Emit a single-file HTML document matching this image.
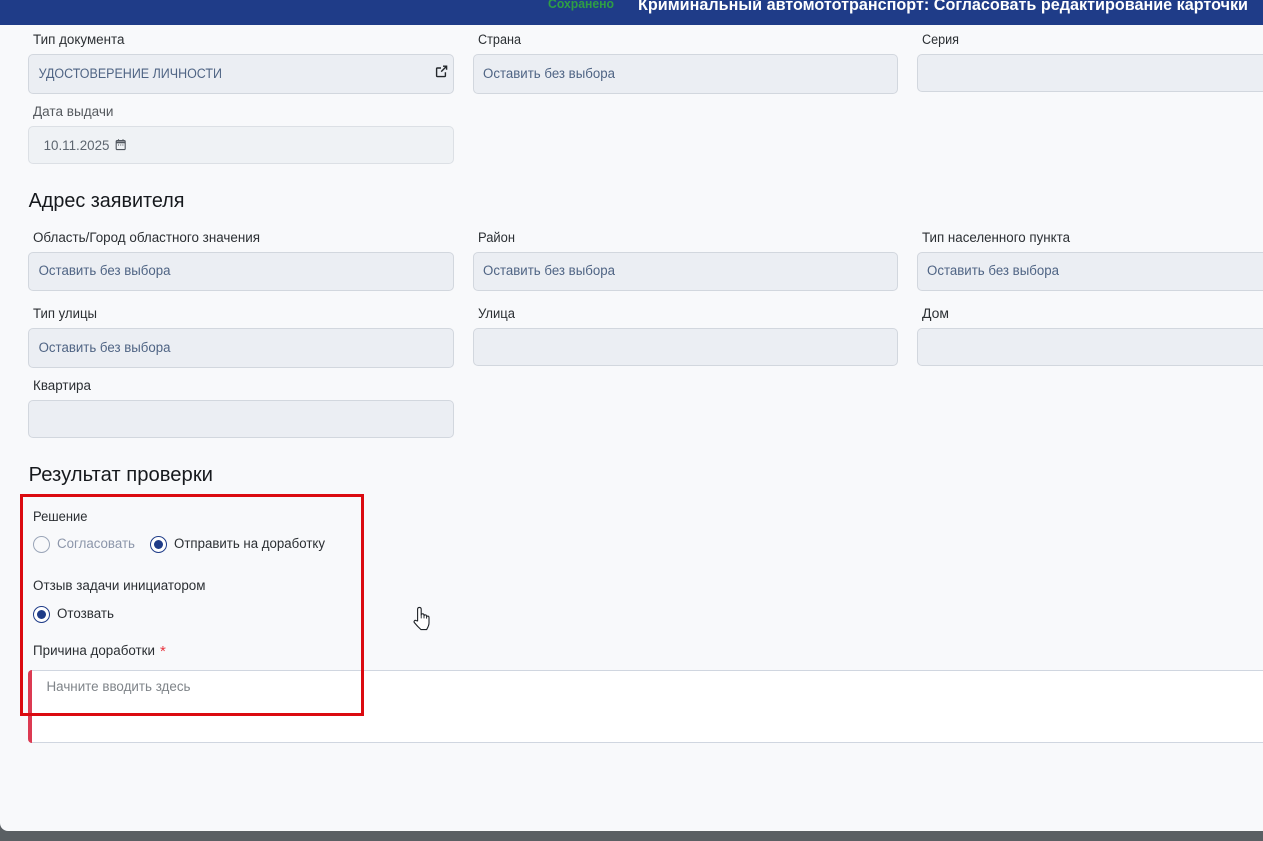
<!DOCTYPE html>
<html lang="ru"><head><meta charset="utf-8"><title>Криминальный автомототранспорт</title>
<style>
html,body{margin:0;padding:0;width:1263px;height:841px;overflow:hidden;background:#5a5f63}
body{position:relative;font-family:"Liberation Sans",sans-serif}
.page{position:absolute;left:0;top:0;width:1263px;height:831px;background:#f8f9fb;border-bottom-left-radius:8px}
.hdr{position:absolute;left:0;top:0;width:1263px;height:25px;background:#1f3c88}
.f{position:absolute;box-sizing:border-box;background:#ebeef3;border:1px solid #d2d7de;border-radius:5px;width:426px}
.f.m{width:425px}
.f.r{width:360px;border-right:0;border-radius:5px 0 0 5px}
svg.t{position:absolute;left:0;top:0}
svg.t text{font-family:"Liberation Sans",sans-serif}
.l{font-size:13.5px;fill:#2b2f33}
.v{font-size:13.5px;fill:#4f6484}
.h{font-size:20px;fill:#16191d}
.ta{position:absolute;left:28px;top:670px;width:1240px;height:73px;box-sizing:border-box;background:#fff;border:1px solid #d0d6e0;border-left:0;border-radius:4px 0 0 4px}
.bar{position:absolute;left:28px;top:670px;width:4px;height:73px;background:#dc3a52;border-radius:4px 0 0 4px}
.redbox{position:absolute;left:20px;top:494px;width:344px;height:222px;box-sizing:border-box;border:3px solid #db0a10}
.rad{position:absolute;box-sizing:border-box;width:17px;height:17px;border-radius:50%;border:1.5px solid #1f3c88;background:#fff}
.rad i{position:absolute;left:2.5px;top:2.5px;width:9px;height:9px;border-radius:50%;background:#1f3c88}
.rad.off{border-color:#9aa5b8;background:#f8f9fb}
</style></head>
<body>
<div class="page"></div>
<div class="hdr"></div>

<div class="f" style="left:28px;top:54px;height:40px"></div>
<div class="f m" style="left:473px;top:54px;height:40px"></div>
<div class="f r" style="left:917px;top:54px;height:38px"></div>
<div class="f" style="left:28px;top:126px;height:38px;background:#eff2f5;border-color:#dce0e5"></div>

<div class="f" style="left:28px;top:252px;height:39px"></div>
<div class="f m" style="left:473px;top:252px;height:39px"></div>
<div class="f r" style="left:917px;top:252px;height:39px"></div>
<div class="f" style="left:28px;top:328px;height:40px"></div>
<div class="f m" style="left:473px;top:328px;height:38px"></div>
<div class="f r" style="left:917px;top:328px;height:38px"></div>
<div class="f" style="left:28px;top:400px;height:38px"></div>

<div class="ta"></div>
<div class="bar"></div>

<div class="rad off" style="left:33px;top:536px"></div>
<div class="rad" style="left:150px;top:536px"><i></i></div>
<div class="rad" style="left:33px;top:606px"><i></i></div>

<svg class="t" width="1263" height="841" viewBox="0 0 1263 841">
<text x="548" y="8" font-size="12.5" font-weight="700" fill="#2f9e44" textLength="66" lengthAdjust="spacingAndGlyphs">Сохранено</text>
<text x="638" y="10" font-size="17" font-weight="700" fill="#ffffff" textLength="610" lengthAdjust="spacingAndGlyphs">Криминальный автомототранспорт: Согласовать редактирование карточки</text>

<text class="l" x="33" y="44" textLength="91.5" lengthAdjust="spacingAndGlyphs">Тип документа</text>
<text class="l" x="478" y="44" textLength="43" lengthAdjust="spacingAndGlyphs">Страна</text>
<text class="l" x="922" y="44" textLength="37" lengthAdjust="spacingAndGlyphs">Серия</text>
<text class="v" x="38.6" y="78" textLength="183.4" lengthAdjust="spacingAndGlyphs">УДОСТОВЕРЕНИЕ ЛИЧНОСТИ</text>
<text class="v" x="483" y="78" textLength="132" lengthAdjust="spacingAndGlyphs">Оставить без выбора</text>
<text class="l" x="33" y="116" textLength="80.5" lengthAdjust="spacingAndGlyphs" style="fill:#55595e">Дата выдачи</text>
<text x="43.6" y="150" font-size="13.5" fill="#5d6670" textLength="65.9" lengthAdjust="spacingAndGlyphs">10.11.2025</text>

<text class="h" x="28.6" y="207" textLength="155.9" lengthAdjust="spacingAndGlyphs">Адрес заявителя</text>
<text class="l" x="33" y="242" textLength="227" lengthAdjust="spacingAndGlyphs">Область/Город областного значения</text>
<text class="l" x="478" y="242" textLength="37" lengthAdjust="spacingAndGlyphs">Район</text>
<text class="l" x="922" y="242" textLength="148" lengthAdjust="spacingAndGlyphs">Тип населенного пункта</text>
<text class="v" x="38.6" y="275" textLength="131.9" lengthAdjust="spacingAndGlyphs">Оставить без выбора</text>
<text class="v" x="483" y="275" textLength="132" lengthAdjust="spacingAndGlyphs">Оставить без выбора</text>
<text class="v" x="927" y="275" textLength="132" lengthAdjust="spacingAndGlyphs">Оставить без выбора</text>

<text class="l" x="33" y="318" textLength="64" lengthAdjust="spacingAndGlyphs">Тип улицы</text>
<text class="l" x="478" y="318" textLength="37" lengthAdjust="spacingAndGlyphs">Улица</text>
<text class="l" x="922" y="318" textLength="27" lengthAdjust="spacingAndGlyphs">Дом</text>
<text class="v" x="38.6" y="352" textLength="131.9" lengthAdjust="spacingAndGlyphs">Оставить без выбора</text>
<text class="l" x="33" y="390" textLength="58" lengthAdjust="spacingAndGlyphs">Квартира</text>

<text class="h" x="28.6" y="481" textLength="184.4" lengthAdjust="spacingAndGlyphs">Результат проверки</text>
<text class="l" x="33" y="521" textLength="54.5" lengthAdjust="spacingAndGlyphs">Решение</text>
<text x="57" y="548" font-size="13.5" fill="#8c96aa" textLength="78" lengthAdjust="spacingAndGlyphs">Согласовать</text>
<text class="l" x="174" y="548" textLength="151" lengthAdjust="spacingAndGlyphs">Отправить на доработку</text>
<text class="l" x="33" y="590" textLength="172.5" lengthAdjust="spacingAndGlyphs">Отзыв задачи инициатором</text>
<text class="l" x="57" y="618" textLength="57" lengthAdjust="spacingAndGlyphs">Отозвать</text>
<text class="l" x="33" y="655" textLength="122" lengthAdjust="spacingAndGlyphs">Причина доработки</text>
<text x="160" y="656" font-size="15" fill="#e8353f">*</text>
<text x="46.5" y="691" font-size="13.5" fill="#7f8489" textLength="144" lengthAdjust="spacingAndGlyphs">Начните вводить здесь</text>

<!-- external link icon -->
<g fill="none" stroke="#23272b" stroke-width="1.4">
<path d="M441 68h-3.6a.8.8 0 0 0-.8.8v7a.8.8 0 0 0 .8.8h7.2a.8.8 0 0 0 .8-.8v-3.6"/>
<path d="M441.2 71.6l5.4-5.4M443 66.2h3.6v3.6"/>
</g>
<!-- calendar icon -->
<g fill="none" stroke="#50565e" stroke-width="1.1">
<rect x="116.2" y="140.6" width="9" height="9" rx="1"/>
<path d="M118.5 139.2v1.6M123 139.2v1.6"/>
<path d="M116.2 142.4h9" stroke-width="1.8"/>
<path d="M118 145h1M120.2 145h1M122.4 145h1"/>
</g>
<!-- hand cursor -->
<path d="M417.6 621V609.2c0-2.4 3.6-2.4 3.6 0V615c.1-1.6 2.6-1.6 2.8 0v1c.2-1.6 2.5-1.5 2.6.2v.8c.3-1.4 2.4-1.2 2.4.6v5.4c0 2.6-1.2 4.4-2.4 6.6h-5.6c-2-1.8-5-5-6.6-7-1-1.3.4-2.8 1.8-2z" fill="#fff" stroke="#1d2126" stroke-width="1.1" stroke-linejoin="round"/>
<path d="M421.2 615v3.4M424 616v2.4M426.6 617v1.6" fill="none" stroke="#1d2126" stroke-width=".9"/>
</svg>

<div class="redbox"></div>
</body></html>
